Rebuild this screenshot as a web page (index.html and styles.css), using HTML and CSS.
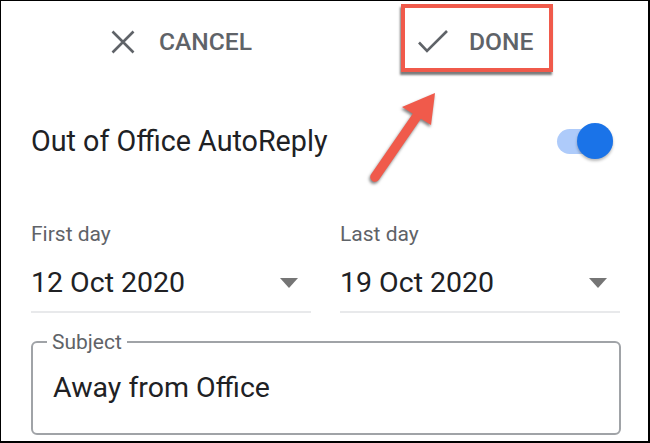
FILE: index.html
```html
<!DOCTYPE html>
<html>
<head>
<meta charset="utf-8">
<link rel="stylesheet" href="styles.css">
</head>
<body>
<div class="frame">
  <div class="header">
    <div class="btn cancel">
      <svg class="ico-x" width="24" height="24" viewBox="0 0 24 24"><path d="M1.5 1.5L22.5 22.5M22.5 1.5L1.5 22.5" stroke="#5f6368" stroke-width="2.6" fill="none"/></svg>
      <span class="btn-text">CANCEL</span>
    </div>
    <div class="btn done">
      <svg class="ico-check" width="30" height="24" viewBox="0 0 30 24"><path d="M1 12.5L9 21L29 1" stroke="#5f6368" stroke-width="2.6" fill="none"/></svg>
      <span class="btn-text">DONE</span>
    </div>
  </div>

  <div class="title-row">
    <span class="title">Out of Office AutoReply</span>
    <div class="switch">
      <div class="track"></div>
      <div class="thumb"></div>
    </div>
  </div>

  <div class="dates">
    <div class="date">
      <div class="label">First day</div>
      <div class="value-row"><span class="value">12 Oct 2020</span><span class="caret"></span></div>
    </div>
    <div class="date">
      <div class="label">Last day</div>
      <div class="value-row"><span class="value">19 Oct 2020</span><span class="caret"></span></div>
    </div>
  </div>

  <fieldset class="subject">
    <legend class="subject-label">Subject</legend>
    <div class="subject-value">Away from Office</div>
  </fieldset>

  <div class="highlight"></div>
  <svg class="arrow" width="650" height="443" viewBox="0 0 650 443">
    <line x1="375" y1="177" x2="417" y2="116" stroke="#f05a4b" stroke-width="9.5" stroke-linecap="round"/>
    <path d="M435 93 L402 107 L431 125 Z" fill="#f05a4b"/>
  </svg>
</div>
</body>
</html>
```

FILE: styles.css
```css
* { box-sizing: border-box; }
html, body { margin: 0; padding: 0; background: #fff; }
body { font-family: Roboto, "Noto Sans", sans-serif; }

.frame {
  position: relative;
  width: 650px;
  height: 443px;
  border: 2px solid #000;
  border-top-width: 1px;
  border-left-width: 1px;
  background: #fff;
  overflow: hidden;
}

.header {
  display: flex;
  padding: 29px 0 0 110px;
}
.btn {
  display: flex;
  align-items: center;
  height: 24px;
  color: #5f6368;
  font-size: 24.6px;
  font-weight: 500;
  line-height: 24px;
}
.cancel { width: 307px; gap: 24px; }
.done { gap: 21px; }
.ico-x, .ico-check { display: block; flex: none; }

.title-row {
  display: flex;
  align-items: center;
  justify-content: space-between;
  height: 36px;
  margin-top: 69px;
  padding: 0 35px 0 30px;
}
.title {
  font-size: 28.7px;
  line-height: 36px;
  color: #202124;
}
.switch {
  position: relative;
  width: 56px;
  height: 36px;
  display: flex;
  align-items: center;
}
.track {
  width: 56px;
  height: 25px;
  border-radius: 13px;
  background: #aecbfa;
}
.thumb {
  position: absolute;
  right: 0;
  top: 0;
  width: 36px;
  height: 36px;
  border-radius: 50%;
  background: #1a73e8;
  box-shadow: 0 2px 3px rgba(0,0,0,0.28);
}

.dates {
  display: grid;
  grid-template-columns: 280px 280px;
  column-gap: 29px;
  margin-top: 63px;
  padding-left: 30px;
}
.label {
  font-size: 21px;
  line-height: 24px;
  color: #5f6368;
}
.value-row {
  display: flex;
  align-items: center;
  justify-content: space-between;
  margin-top: 19px;
  padding: 0 13px 10px 0;
  border-bottom: 2px solid #e8e9eb;
}
.value {
  font-size: 28.5px;
  line-height: 36px;
  color: #202124;
}
.caret {
  width: 0;
  height: 0;
  border-left: 9px solid transparent;
  border-right: 9px solid transparent;
  border-top: 10px solid #757575;
}

.subject {
  margin: 17px 0 0 30px;
  width: 590px;
  height: 105px;
  padding: 0 20px;
  border: 2px solid #a0a3a7;
  border-radius: 6px;
}
.subject-label {
  font-size: 21px;
  line-height: 24px;
  color: #5f6368;
  padding: 0 5px;
  margin-left: -6px;
}
.subject-value {
  margin-top: 16px;
  font-size: 28.5px;
  line-height: 36px;
  color: #202124;
}

.highlight {
  position: absolute;
  left: 400px;
  top: 3px;
  width: 152px;
  height: 68px;
  border: 4px solid #f05a4b;
  box-shadow: -1px 3px 2px rgba(50,50,50,0.65);
}
.arrow {
  position: absolute;
  left: -1px;
  top: -1px;
  filter: drop-shadow(-1px 2px 1.5px rgba(0,0,0,0.5));
}
```
